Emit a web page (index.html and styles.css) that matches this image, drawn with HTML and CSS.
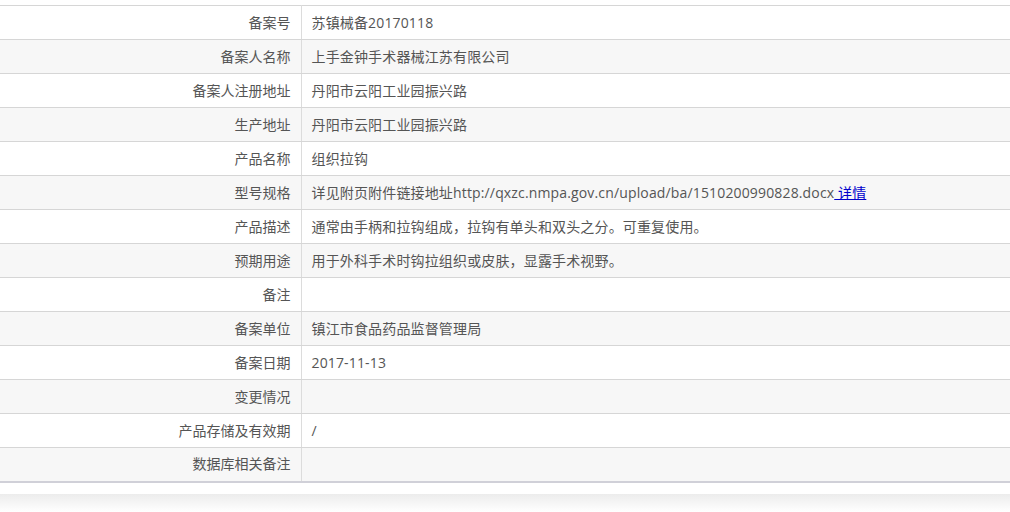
FILE: index.html
```html
<!DOCTYPE html>
<html lang="zh-CN">
<head>
<meta charset="utf-8">
<title>备案信息</title>
<link rel="stylesheet" href="styles.css">
</head>
<body>
<div class="panel">
<table class="info">
<tbody>
<tr><td class="label">备案号</td><td class="value">苏镇械备20170118</td></tr>
<tr><td class="label">备案人名称</td><td class="value">上手金钟手术器械江苏有限公司</td></tr>
<tr><td class="label">备案人注册地址</td><td class="value">丹阳市云阳工业园振兴路</td></tr>
<tr><td class="label">生产地址</td><td class="value">丹阳市云阳工业园振兴路</td></tr>
<tr><td class="label">产品名称</td><td class="value">组织拉钩</td></tr>
<tr><td class="label">型号规格</td><td class="value">详见附页附件链接地址http://qxzc.nmpa.gov.cn/upload/ba/1510200990828.docx<a class="link" href="#">&nbsp;详情</a></td></tr>
<tr><td class="label">产品描述</td><td class="value">通常由手柄和拉钩组成，拉钩有单头和双头之分。可重复使用。</td></tr>
<tr><td class="label">预期用途</td><td class="value">用于外科手术时钩拉组织或皮肤，显露手术视野。</td></tr>
<tr><td class="label">备注</td><td class="value"></td></tr>
<tr><td class="label">备案单位</td><td class="value">镇江市食品药品监督管理局</td></tr>
<tr><td class="label">备案日期</td><td class="value">2017-11-13</td></tr>
<tr><td class="label">变更情况</td><td class="value"></td></tr>
<tr><td class="label">产品存储及有效期</td><td class="value">/</td></tr>
<tr><td class="label">数据库相关备注</td><td class="value"></td></tr>
</tbody>
</table>
<div class="shade"></div>
</div>
</body>
</html>
```

FILE: styles.css
```css
html, body {
  margin: 0;
  padding: 0;
  background: #fff;
}
body {
  padding-top: 5px;
  font-family: "Open Sans", "Noto Sans CJK SC", sans-serif;
  font-size: 14px;
  color: #555;
}
.info {
  width: 100%;
  border-collapse: collapse;
  table-layout: fixed;
}
.info tr:nth-child(even) td {
  background: #f7f7f7;
}
.info td {
  height: 34px;
  padding: 0 10px;
  border-top: 1px solid #d6d6d6;
  border-bottom: 1px solid #d6d6d6;
  box-sizing: border-box;
  line-height: 20px;
  vertical-align: middle;
  white-space: nowrap;
}
.info tr:last-child td {
  border-bottom: 2px solid #d0d0d8;
}
.info td.label {
  width: 301px;
  text-align: right;
  border-right: 1px solid #dcdcdc;
  color: #555;
}
.info td.value {
  text-align: left;
  color: #555;
  letter-spacing: 0.15px;
}
.link {
  color: #0000cc;
  text-decoration: underline;
}
.shade {
  margin-top: 11px;
  height: 18px;
  background: linear-gradient(#ececec, #ffffff);
}
```
